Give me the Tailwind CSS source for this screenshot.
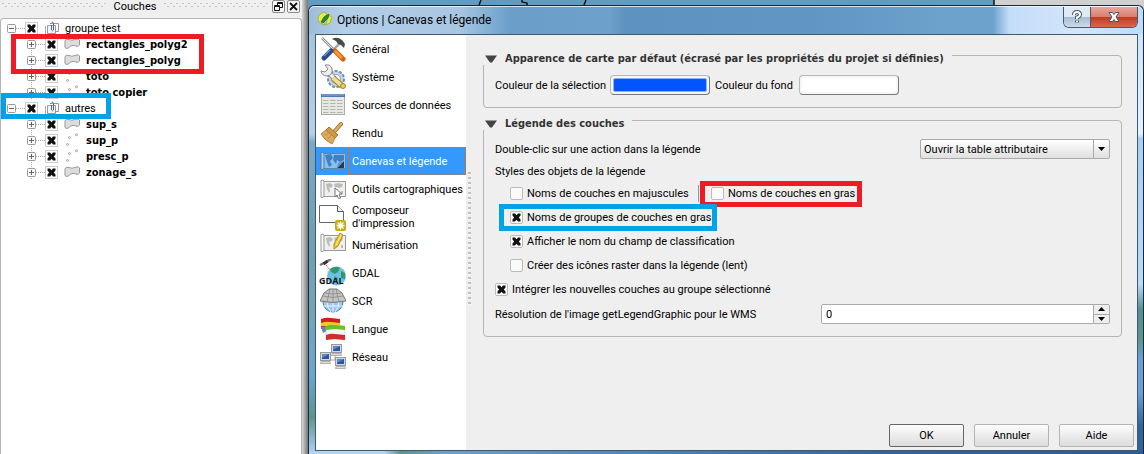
<!DOCTYPE html>
<html lang="fr">
	<head>
		<meta charset="UTF-8" />
		<meta name="viewport" content="width=device-width, initial-scale=1.0" />
		<title>Options | Canevas et légende</title>
		<script src="https://cdn.jsdelivr.net/npm/@tailwindcss/browser@4"></script>
	</head>
	<body
		class="flex h-screen overflow-hidden bg-[#efefef] font-[Roboto,'Liberation_Sans',sans-serif] text-[11px] leading-[13px] text-black"
	>
		<!-- Symboles SVG -->
		<svg class="hidden">
			<symbol id="cross" viewBox="0 0 13 13">
				<path d="M2.5 2.5H5L6.5 4.3L8 2.5H10.5V4.6L8.8 6.5L10.5 8.4V10.5H8L6.5 8.8L5 10.5H2.5V8.4L4.2 6.5L2.5 4.6Z" fill="#111" />
			</symbol>
			<symbol id="plus" viewBox="0 0 18 16">
				<path d="M4.500 0V16M9 8.500H18" stroke="#aaa" stroke-dasharray="1 1" />
				<rect x=".5" y="4.500" width="8" height="8" rx="1" fill="#fafafa" stroke="#999" />
				<path d="M2 8.500H7M4.500 6V11" stroke="#666" />
			</symbol>
			<symbol id="minus" viewBox="0 0 18 16">
				<path d="M9 8.500H18" stroke="#aaa" stroke-dasharray="1 1" />
				<rect x=".5" y="4.500" width="8" height="8" rx="1" fill="#fafafa" stroke="#999" />
				<path d="M2 8.500H7" stroke="#666" />
			</symbol>
			<symbol id="group" viewBox="0 0 14 14">
				<path d="M.5 5V13.500" fill="none" stroke="#aaa" />
				<path d="M2.500 4.500V12.500H10.500V4.500Z" fill="#f4f4f4" stroke="#999" />
				<path d="M5 2.500H13.500V10.500H10.500" fill="none" stroke="#999" />
				<path d="M6.500 4V9Q7.500 10.500 8.500 9V2.500Q7.500 0 6.500 2" fill="none" stroke="#4a6a9a" />
			</symbol>
			<symbol id="polygon" viewBox="0 0 16 12">
				<path d="M1 2.500Q2 .5 5 1.500Q8 3 10.500 1.500Q14 0 15.500 2V7Q14.500 9 12 8Q9 6.500 6.500 8Q5 10.500 2.500 10.500Q0 10 1 7Z" fill="#ddd" stroke="#999" />
			</symbol>
			<symbol id="points" viewBox="0 0 16 14">
				<g fill="#eee" stroke="#999" stroke-width=".8">
					<circle cx="3.500" cy="11.500" r="1" />
					<circle cx="5.500" cy="4.500" r="1" />
					<circle cx="12.500" cy="1.800" r="1" />
				</g>
			</symbol>
			<symbol id="map" viewBox="0 0 26 20">
				<path d="M3 2.500H25.500V17.500H3Z" fill="#f0f1ee" stroke="#999" />
				<path d="M6 5L10 4L13 6L11 9L9 8L10 12L9 14L7 10ZM14 5L18 4L23 5L22 8L19 9L17 8L15 9ZM16 10L18 10L18 14L16 13ZM21 12H23V15H21Z" fill="#b8bdb6" />
				<path d="M1 1.500Q3.500 0 4 2.500V17Q3.500 19 1 18.500Z" fill="#f8f8f8" stroke="#999" />
			</symbol>
			<symbol id="computer" viewBox="0 0 11 12">
				<rect x=".5" y=".5" width="10" height="8" fill="#d8d8d0" stroke="#999" />
				<rect x="2" y="2" width="7" height="5" fill="#2858a8" />
				<path d="M2 2H9L2 6Z" fill="#5a8ad0" />
				<path d="M1 9.500H10L10.500 11.500H.5Z" fill="#ddd" stroke="#999" stroke-width=".7" />
			</symbol>
		</svg>

		<!-- Panneau des couches -->
		<aside class="flex w-[302px] shrink-0 flex-col">
			<header class="flex h-[18px] items-start pr-0.5 pl-0.5">
				<svg class="mt-[3px] h-1.5 min-w-0 flex-1"><defs><pattern id="grip" width="6" height="6" patternUnits="userSpaceOnUse"><path d="M0 .5H2M3 3.500H5" stroke="#c4c4c4" /></pattern></defs><rect width="100%" height="6" fill="url(#grip)" /></svg>
				<h2 class="px-2">Couches</h2>
				<svg class="mt-[3px] h-1.5 min-w-0 flex-1"><rect width="100%" height="6" fill="url(#grip)" /></svg>
				<button aria-label="Détacher" class="ml-1 grid size-[13px] place-items-center rounded-xs border border-[#888] bg-[#f5f5f5]">
					<svg class="size-[9px]" viewBox="0 0 9 9"><path d="M3.500 3V.5H8.500V5.500H6M3 1.500H9" fill="none" stroke="#111" /><path d="M.5 3.500H5.500V8.500H.5ZM0 4.500H6" fill="none" stroke="#111" /></svg>
				</button>
				<button aria-label="Fermer le panneau" class="ml-0.5 grid size-[13px] place-items-center rounded-xs border border-[#888] bg-[#f5f5f5]">
					<svg class="size-[9px]" viewBox="0 0 9 9"><path d="M1 1L8 8M8 1L1 8" stroke="#111" stroke-width="1.800" /></svg>
				</button>
			</header>

			<div class="relative flex-1 rounded-t-sm border border-b-0 border-[#b4b4b4] bg-white pt-px">
				<ul class="[&_.font-bold]:font-['DejaVu_Sans_Condensed','DejaVu_Sans',sans-serif] [&_.font-bold]:font-bold">
					<li>
						<div class="flex h-4 items-center pl-1.5">
							<svg class="h-4 w-[18px]"><use href="#minus" /></svg>
							<span class="grid"><input id="g1" type="checkbox" checked class="peer size-[13px] appearance-none border border-[#ccc] bg-white [grid-area:1/1]" /><svg class="pointer-events-none hidden size-[13px] [grid-area:1/1] peer-checked:block"><use href="#cross" /></svg></span>
							<svg class="mr-1.5 ml-[7px] size-3.5"><use href="#group" /></svg>
							<label for="g1">groupe test</label>
						</div>
						<ul class="pl-[26px]">
							<li class="flex h-4 items-center">
								<svg class="h-4 w-[18px]"><use href="#plus" /></svg>
								<span class="grid"><input id="c1" type="checkbox" checked class="peer size-[13px] appearance-none border border-[#ccc] bg-white [grid-area:1/1]" /><svg class="pointer-events-none hidden size-[13px] [grid-area:1/1] peer-checked:block"><use href="#cross" /></svg></span>
								<svg class="mr-1.5 ml-1.5 h-3 w-4"><use href="#polygon" /></svg>
								<label for="c1" class="font-bold">rectangles_polyg2</label>
							</li>
							<li class="flex h-4 items-center">
								<svg class="h-4 w-[18px]"><use href="#plus" /></svg>
								<span class="grid"><input id="c2" type="checkbox" checked class="peer size-[13px] appearance-none border border-[#ccc] bg-white [grid-area:1/1]" /><svg class="pointer-events-none hidden size-[13px] [grid-area:1/1] peer-checked:block"><use href="#cross" /></svg></span>
								<svg class="mr-1.5 ml-1.5 h-3 w-4"><use href="#polygon" /></svg>
								<label for="c2" class="font-bold">rectangles_polyg</label>
							</li>
							<li class="flex h-4 items-center">
								<svg class="h-4 w-[18px]"><use href="#plus" /></svg>
								<span class="grid"><input id="c3" type="checkbox" checked class="peer size-[13px] appearance-none border border-[#ccc] bg-white [grid-area:1/1]" /><svg class="pointer-events-none hidden size-[13px] [grid-area:1/1] peer-checked:block"><use href="#cross" /></svg></span>
								<svg class="mr-1.5 ml-1.5 h-3.5 w-4"><use href="#points" /></svg>
								<label for="c3" class="font-bold">toto</label>
							</li>
							<li class="flex h-4 items-center">
								<svg class="h-4 w-[18px]"><use href="#plus" /></svg>
								<span class="grid"><input id="c4" type="checkbox" checked class="peer size-[13px] appearance-none border border-[#ccc] bg-white [grid-area:1/1]" /><svg class="pointer-events-none hidden size-[13px] [grid-area:1/1] peer-checked:block"><use href="#cross" /></svg></span>
								<svg class="mr-1.5 ml-1.5 h-3.5 w-4"><use href="#points" /></svg>
								<label for="c4" class="font-bold">toto copier</label>
							</li>
						</ul>
					</li>
					<li>
						<div class="flex h-4 items-center pl-1.5">
							<svg class="h-4 w-[18px]"><use href="#minus" /></svg>
							<span class="grid"><input id="g2" type="checkbox" checked class="peer size-[13px] appearance-none border border-[#ccc] bg-white [grid-area:1/1]" /><svg class="pointer-events-none hidden size-[13px] [grid-area:1/1] peer-checked:block"><use href="#cross" /></svg></span>
							<svg class="mr-1.5 ml-[7px] size-3.5"><use href="#group" /></svg>
							<label for="g2">autres</label>
						</div>
						<ul class="pl-[26px]">
							<li class="flex h-4 items-center">
								<svg class="h-4 w-[18px]"><use href="#plus" /></svg>
								<span class="grid"><input id="c5" type="checkbox" checked class="peer size-[13px] appearance-none border border-[#ccc] bg-white [grid-area:1/1]" /><svg class="pointer-events-none hidden size-[13px] [grid-area:1/1] peer-checked:block"><use href="#cross" /></svg></span>
								<svg class="mr-1.5 ml-1.5 h-3 w-4"><use href="#polygon" /></svg>
								<label for="c5" class="font-bold">sup_s</label>
							</li>
							<li class="flex h-4 items-center">
								<svg class="h-4 w-[18px]"><use href="#plus" /></svg>
								<span class="grid"><input id="c6" type="checkbox" checked class="peer size-[13px] appearance-none border border-[#ccc] bg-white [grid-area:1/1]" /><svg class="pointer-events-none hidden size-[13px] [grid-area:1/1] peer-checked:block"><use href="#cross" /></svg></span>
								<svg class="mr-1.5 ml-1.5 h-3.5 w-4"><use href="#points" /></svg>
								<label for="c6" class="font-bold">sup_p</label>
							</li>
							<li class="flex h-4 items-center">
								<svg class="h-4 w-[18px]"><use href="#plus" /></svg>
								<span class="grid"><input id="c7" type="checkbox" checked class="peer size-[13px] appearance-none border border-[#ccc] bg-white [grid-area:1/1]" /><svg class="pointer-events-none hidden size-[13px] [grid-area:1/1] peer-checked:block"><use href="#cross" /></svg></span>
								<svg class="mr-1.5 ml-1.5 h-3.5 w-4"><use href="#points" /></svg>
								<label for="c7" class="font-bold">presc_p</label>
							</li>
							<li class="flex h-4 items-center">
								<svg class="h-4 w-[18px]"><use href="#plus" /></svg>
								<span class="grid"><input id="c8" type="checkbox" checked class="peer size-[13px] appearance-none border border-[#ccc] bg-white [grid-area:1/1]" /><svg class="pointer-events-none hidden size-[13px] [grid-area:1/1] peer-checked:block"><use href="#cross" /></svg></span>
								<svg class="mr-1.5 ml-1.5 h-3 w-4"><use href="#polygon" /></svg>
								<label for="c8" class="font-bold">zonage_s</label>
							</li>
						</ul>
					</li>
				</ul>
				<!-- Cadres de repérage -->
				<div class="pointer-events-none absolute top-[15px] left-2.5 h-10 w-[193px] border-5 border-[#ed1c24]"></div>
				<div class="pointer-events-none absolute top-[74px] left-0 h-[26px] w-[110px] border-5 border-[#00a2e8]"></div>
			</div>
		</aside>

		<!-- Séparateur -->
		<div class="w-1.5 shrink-0 bg-linear-to-r from-[#d8d8d8] to-[#777]"></div>

		<!-- Fenêtre Options -->
		<div class="flex min-w-0 flex-1 flex-col bg-[linear-gradient(90deg,#5f9cc0_82%,#d0d0d0_82%)]">
			<svg class="h-[5px] w-full shrink-0" viewBox="0 0 836 5" preserveAspectRatio="none"><path d="M173 0L171 5M214 0V2L219 3V5M278 0L276 5M686 0V5" fill="none" stroke="#111" stroke-width="1.500" /></svg>
			<div role="dialog" aria-labelledby="dlg" class="flex min-h-0 flex-1 flex-col rounded-t-md border border-b-0 border-[#1c2a38] bg-[#b9d1ea]">
				<header
					class="flex h-7 shrink-0 items-start rounded-t-md border-t border-white/70 bg-[linear-gradient(90deg,#9dbcd8_0%,#b4cfe8_4%,#a8c6e2_18%,#6b9fc9_24%,#6da1cb_36%,#5f93bf_38%,#6195c2_60%,#6da2cc_76%,#6da2cc_82%,#c4ddf8_84%,#d3e6fb_92%,#bcdcfb_100%)] pr-[5px] pl-2"
				>
					<svg class="mt-1 size-4" viewBox="0 0 16 16">
						<path d="M7 1Q1 3 1 8Q1 12 5 13L8 14L6 10L8 6L10 3ZM12 4L15 6L13 12L9 14L10 9Z" fill="#e0ee50" stroke="#93ad22" stroke-width=".8" />
						<path d="M12 3L7 6L4 11L6 12L11 7Z" fill="#2f8a2f" stroke="#1e6a28" stroke-width=".8" />
						<path d="M12 3L14 1" stroke="#e8c890" stroke-width="1.500" />
					</svg>
					<h1 id="dlg" class="mt-1.5 ml-1 flex-1 text-[12px] leading-[15px]">Options | Canevas et légende</h1>
					<div class="flex h-[21px] overflow-hidden rounded-b-md border border-t-0 border-[#4a5868]">
						<button aria-label="Aide contextuelle" class="grid w-[27px] place-items-center border-r border-[#4a5868] bg-[linear-gradient(#dfeaf5_50%,#a9bdd0_50%,#c8dced)]">
							<svg class="h-3.5 w-3" viewBox="0 0 12 14"><path d="M3 5Q3 2 6 2T9 4.500Q9 6.500 6 7.500V9M6 10.500V12.500" fill="none" stroke="#4c5566" stroke-width="4" /><path d="M3 5Q3 2 6 2T9 4.500Q9 6.500 6 7.500V9M6 10.800V12.300" fill="none" stroke="#fff" stroke-width="2" /></svg>
						</button>
						<button aria-label="Fermer" class="grid w-[46px] place-items-center bg-[linear-gradient(#eaa59a_0%,#d9806f_48%,#bf3a22_50%,#d9684a_100%)]">
							<svg class="h-3 w-3.5" viewBox="0 0 14 12"><path d="M2 1.500H5.500L7 3.500L8.500 1.500H12L9 6L12 10.500H8.500L7 8.500L5.500 10.500H2L5 6Z" fill="#fff" stroke="#4c5566" /></svg>
						</button>
					</div>
				</header>

				<div class="flex min-h-0 flex-1">
					<div class="w-1.5 bg-[linear-gradient(#a5c4de_0%,#b5d0e6_24%,#7ba8c8_26%,#6f9fb4_50%,#74a4b4_65%,#6aa5d0_82%,#5c958c_92%,#a8cdf0_100%)]"></div>
					<div class="flex min-w-0 flex-1 border border-[#3f5a70] bg-[#efefef]">
						<!-- Navigation -->
						<nav class="w-[150px] shrink-0 bg-white">
							<ul class="[&_a]:flex [&_a]:h-7 [&_a]:items-center [&_a]:gap-1.5 [&_a]:pl-1 [&_svg]:shrink-0">
								<li><a href="#general">
									<svg class="size-[26px]" viewBox="0 0 26 26">
										<path d="M2 2L14 14" stroke="#999" stroke-width="2.600" /><path d="M2 2L14 14" stroke="#ddd" />
										<path d="M20 7L11 16" stroke="#aaa" stroke-width="2.500" />
										<path d="M15 15L23 23" stroke="#d8640a" stroke-width="5" stroke-linecap="round" /><path d="M15 15L22 22" stroke="#ff9a3c" stroke-width="2.500" />
										<path d="M11 15L4 22" stroke="#254d8d" stroke-width="5" stroke-linecap="round" /><path d="M10 14L4 20" stroke="#6a94cc" stroke-width="1.500" />
										<path d="M12 3Q17 0 22 4L25 8L24 12L21 9L18 8L16 5Z" fill="#484c4c" />
									</svg>
									<span>Général</span>
								</a></li>
								<li><a href="#systeme">
									<svg class="size-[26px]" viewBox="0 0 26 26">
										<circle cx="16" cy="15" r="8" fill="#c4d6e6" stroke="#6d8fb4" stroke-width="2" stroke-dasharray="3 1.500" />
										<circle cx="16" cy="15" r="4.500" fill="#fff" stroke="#8aa6c0" />
										<path d="M8 8L15 15" stroke="#888" stroke-width="5" /><path d="M7 7L16 16" stroke="#eee" stroke-width="3.200" />
										<path d="M5 1Q11 0 12 5Q13 11 7 12Q2 12 1 7L5 8L8 5Z" fill="#eee" stroke="#888" />
										<path d="M13 14L22 22" stroke="#a08030" stroke-width="6" /><path d="M13 14L22 22" stroke="#f0dc8c" stroke-width="4" />
										<circle cx="23" cy="22" r="2.500" fill="#f0cc50" stroke="#a08030" />
									</svg>
									<span>Système</span>
								</a></li>
								<li><a href="#sources">
									<svg class="size-[26px]" viewBox="0 0 26 26">
										<rect x="1.500" y="2.500" width="23" height="20" fill="#e8e8e4" stroke="#aaa" />
										<path d="M1 2H25V5H1Z" fill="#4a7ab8" /><path d="M2 3H24" stroke="#8ab0e0" />
										<path d="M3 8.500H23M3 11.500H23M3 14.500H23M3 17.500H23M3 20.500H23" stroke="#b4b4b0" stroke-dasharray="5.500 1.500" />
									</svg>
									<span>Sources de données</span>
								</a></li>
								<li><a href="#rendu">
									<svg class="size-[26px]" viewBox="0 0 26 26">
										<path d="M14 12L21 4" stroke="#9a6a2a" stroke-width="4" stroke-linecap="round" /><path d="M14 12L21 4" stroke="#e0ac60" stroke-width="2.500" stroke-linecap="round" />
										<path d="M9 7L18 15L15 18L6 10Z" fill="#d09a48" stroke="#a87428" />
										<path d="M6 10L15 18L12 24Q5 21 1 14Z" fill="#dcaa5c" stroke="#b48438" />
										<path d="M8 13L5 16M11 15L8 19" stroke="#c09048" />
									</svg>
									<span>Rendu</span>
								</a></li>
								<li><a href="#canevas" aria-current="page" class="bg-[#3399ff] text-white">
									<svg class="h-5 w-[26px]" viewBox="0 0 26 20">
										<path d="M3 2.500H25.500V17.500H3Z" fill="#8cc0ee" stroke="#5f86b0" />
										<path d="M5 4L11 3L13 7L10 10L12 14L9 16L7 11ZM14 4L24 4V9L20 11L17 9L16 13L13 9Z" fill="#3f80c0" />
										<path d="M17 17L24 10V17Z" fill="#1c3c60" /><path d="M17 17L18 12L24 10Z" fill="#5a96d0" />
										<path d="M1 1.500Q3.500 0 4 2.500V17Q3.500 19 1 18.500Z" fill="#a8d0f4" stroke="#5577a0" />
									</svg>
									<span class="-ml-1 flex h-full flex-1 items-center border border-dotted border-[#d07020] pl-[3px] whitespace-nowrap">Canevas et légende</span>
								</a></li>
								<li><a href="#outils">
									<svg class="h-5 w-[26px]" viewBox="0 0 26 20"><use href="#map" width="26" height="20" /><path d="M15 9V18L17 16L18.500 19.500L20.500 19L19 15H22Z" fill="#fff" stroke="#777" /></svg>
									<span class="whitespace-nowrap">Outils cartographiques</span>
								</a></li>
								<li><a href="#composeur">
									<svg class="-ml-px h-7 w-[27px]" viewBox="0 0 27 28">
										<path d="M.5 2.500H18.500L24.500 8.500V19.500H.5Z" fill="#fff" stroke="#666" /><path d="M18.500 2.500V8.500H24.500" fill="#eee" stroke="#555" />
										<rect x="16" y="17" width="11" height="11" rx="2" fill="#c8a818" />
										<path d="M21.500 18.500V26.500M17.500 22.500H25.500M18.500 19.500L24.500 25.500M24.500 19.500L18.500 25.500" stroke="#fff" stroke-width="1.300" />
									</svg>
									<span>Composeur d'impression</span>
								</a></li>
								<li><a href="#numerisation">
									<svg class="h-6 w-[26px]" viewBox="0 0 26 24"><use href="#map" width="26" height="20" /><path d="M20 0L23 2L18 13L14 16V11Z" fill="#f2c832" stroke="#b08c20" /><path d="M21 2L16 12" stroke="#fff09a" /></svg>
									<span>Numérisation</span>
								</a></li>
								<li><a href="#gdal">
									<svg class="-ml-px h-7 w-[27px]" viewBox="0 0 27 28">
										<circle cx="17.500" cy="17" r="9.500" fill="#6ec0ea" />
										<path d="M11 10Q17 6 21 9L19 13L16 15L12 13ZM22 12L26 14L26 20L22 19ZM15 17L19 19L17 24Z" fill="#2f9a62" />
										<path d="M1 6L5 4M8 2.500L12 0" stroke="#777" stroke-width="2.500" /><path d="M4.500 5L8.500 2" stroke="#333" stroke-width="3" />
										<path d="M7 6L11 11" stroke="#d33" stroke-dasharray="1 1" />
										<text x="0" y="25" font-family="Open Sans, DejaVu Sans Condensed" font-size="9" font-weight="bold" fill="#111">GDAL</text>
									</svg>
									<span>GDAL</span>
								</a></li>
								<li><a href="#scr">
									<svg class="size-[26px]" viewBox="0 0 26 26">
										<circle cx="13" cy="14" r="10" fill="#9cc8ee" stroke="#4a80b8" />
										<path d="M13 14V24M3 18H23M7 13Q7 20 11 24M19 13Q19 20 15 24" fill="none" stroke="#e8f4ff" />
										<path d="M9 1H17L22 5L26 13Q13 16 0 13L4 5Z" fill="#c4c4c4" stroke="#777" />
										<path d="M3 8Q13 11 23 8M5 5Q13 7 21 5M10 1L7 14M16 1L19 14M13 1V15" fill="none" stroke="#888" stroke-width=".8" />
									</svg>
									<span>SCR</span>
								</a></li>
								<li><a href="#langue">
									<svg class="size-[26px]" viewBox="0 0 26 26">
										<path d="M1 3Q6 1 11 2L20 3V13H1Z" fill="#cc2020" /><path d="M1 7Q6 5 11 6L20 7V10H1Z" fill="#f6c820" /><path d="M1 11Q4 10 7 11V15L3 17Z" fill="#5a88b8" />
										<path d="M6 10Q11 8 15 9L25 10V24L15 23L6 22Z" fill="#f4f4f4" stroke="#bbb" stroke-width=".5" /><path d="M6 10Q11 8 15 9L25 10V14L15 13L6 14Z" fill="#6cbf28" /><path d="M6 19Q11 17 15 18L25 19V24L15 23L6 24Z" fill="#d42c2c" />
									</svg>
									<span>Langue</span>
								</a></li>
								<li><a href="#reseau">
									<svg class="size-[26px]" viewBox="0 0 26 26"><path d="M6 16H20V22M15 10V16" fill="none" stroke="#aaa" /><use href="#computer" x="11" y="0" width="11" height="12" /><use href="#computer" x="0" y="8" width="11" height="12" /><use href="#computer" x="15" y="13" width="11" height="12" /></svg>
									<span>Réseau</span>
								</a></li>
							</ul>
						</nav>

						<div class="flex w-1.5 shrink-0 items-center justify-center pb-2"><div class="h-[134px] w-[3px] bg-[repeating-linear-gradient(#c0c0c0_0px,#c0c0c0_2px,#f8f8f8_2px,#f8f8f8_3px,transparent_3px,transparent_5px)]"></div></div>

						<!-- Page Canevas et légende -->
						<form class="flex min-w-0 flex-1 flex-col pt-5 pr-[3px] pb-[3px] pl-[11px]">
							<fieldset class="relative mr-3 rounded-sm border border-[#b4b4b4] px-[11px] pt-[19px] pb-3">
								<legend class="absolute -top-1 -left-px flex items-center gap-2 bg-[#efefef] pr-2 pl-0.5 font-['DejaVu_Sans_Condensed','DejaVu_Sans',sans-serif] font-bold text-[#333]">
									<svg class="h-2 w-3" viewBox="0 0 12 8"><path d="M0 .5H12L7 7.500H5Z" fill="#444" /></svg>
									Apparence de carte par défaut (écrasé par les propriétés du projet si définies)
								</legend>
								<div class="flex h-5 items-center whitespace-nowrap">
									<label for="sel" class="w-[115px]">Couleur de la sélection</label>
									<button id="sel" type="button" class="h-5 w-[100px] rounded-sm border border-[#b8b8b8] border-r-[#777] border-b-[#777] bg-[#f6f6f6] p-0.5"><span class="block h-full rounded-xs border border-[#8ab4ff] bg-[#0055ff]"></span></button>
									<label for="fond" class="ml-[5px] w-[84px]">Couleur du fond</label>
									<button id="fond" type="button" class="h-5 w-[100px] rounded-sm border border-[#b8b8b8] border-r-[#777] border-b-[#777] bg-[#f6f6f6] p-0.5"><span class="block h-full rounded-xs bg-white"></span></button>
								</div>
							</fieldset>

							<fieldset class="relative mt-3 mr-3 rounded-sm border border-[#b4b4b4] px-[11px] pt-[18px] pb-3">
								<legend class="absolute -top-1 -left-px flex items-center gap-2 bg-[#efefef] pr-2 pl-0.5 font-['DejaVu_Sans_Condensed','DejaVu_Sans',sans-serif] font-bold text-[#333]">
									<svg class="h-2 w-3" viewBox="0 0 12 8"><path d="M0 .5H12L7 7.500H5Z" fill="#444" /></svg>
									Légende des couches
								</legend>
								<div class="flex h-5 items-center justify-between">
									<label for="action">Double-clic sur une action dans la légende</label>
									<div class="relative">
										<select id="action" class="h-5 w-[190px] appearance-none rounded-xs border border-[#aaa] bg-linear-to-b from-white to-[#e0e0e0] pl-[3px] leading-[13px]">
											<option>Ouvrir la table attributaire</option>
										</select>
										<span class="pointer-events-none absolute inset-y-px right-px grid w-4 place-items-center border-l border-[#aaa]"><svg class="h-1 w-[7px]" viewBox="0 0 7 4"><path d="M0 0H7L3.500 4Z" /></svg></span>
									</div>
								</div>
								<p class="mt-1.5 h-4">Styles des objets de la légende</p>
								<div class="pl-[15px]">
									<div class="flex h-6 items-center">
										<div class="flex w-[188px] items-center gap-1">
											<span class="grid"><input id="o1" type="checkbox" class="peer size-[13px] appearance-none rounded-xs border border-[#bbb] bg-[#fafafa] [grid-area:1/1]" /><svg class="pointer-events-none hidden size-[13px] [grid-area:1/1] peer-checked:block"><use href="#cross" /></svg></span>
											<label for="o1">Noms de couches en majuscules</label>
										</div>
										<div class="relative flex items-center gap-1 border-l border-[#999] py-0.5 pl-3">
											<span class="grid"><input id="o2" type="checkbox" class="peer size-[13px] appearance-none rounded-xs border border-[#bbb] bg-[#fafafa] [grid-area:1/1]" /><svg class="pointer-events-none hidden size-[13px] [grid-area:1/1] peer-checked:block"><use href="#cross" /></svg></span>
											<label for="o2">Noms de couches en gras</label>
											<div class="pointer-events-none absolute -top-1 left-px h-[26px] w-[162px] border-5 border-[#ed1c24]"></div>
										</div>
									</div>
									<div class="relative flex h-6 items-center gap-1">
										<span class="grid"><input id="o3" type="checkbox" checked class="peer size-[13px] appearance-none rounded-xs border border-[#bbb] bg-[#fafafa] [grid-area:1/1]" /><svg class="pointer-events-none hidden size-[13px] [grid-area:1/1] peer-checked:block"><use href="#cross" /></svg></span>
										<label for="o3">Noms de groupes de couches en gras</label>
										<div class="pointer-events-none absolute -top-px -left-[11px] h-[27px] w-[218px] border-5 border-[#00a2e8]"></div>
									</div>
									<div class="flex h-6 items-center gap-1">
										<span class="grid"><input id="o4" type="checkbox" checked class="peer size-[13px] appearance-none rounded-xs border border-[#bbb] bg-[#fafafa] [grid-area:1/1]" /><svg class="pointer-events-none hidden size-[13px] [grid-area:1/1] peer-checked:block"><use href="#cross" /></svg></span>
										<label for="o4">Afficher le nom du champ de classification</label>
									</div>
									<div class="flex h-6 items-center gap-1">
										<span class="grid"><input id="o5" type="checkbox" class="peer size-[13px] appearance-none rounded-xs border border-[#bbb] bg-[#fafafa] [grid-area:1/1]" /><svg class="pointer-events-none hidden size-[13px] [grid-area:1/1] peer-checked:block"><use href="#cross" /></svg></span>
										<label for="o5">Créer des icônes raster dans la légende (lent)</label>
									</div>
								</div>
								<div class="flex h-6 items-center gap-1">
									<span class="grid"><input id="o6" type="checkbox" checked class="peer size-[13px] appearance-none rounded-xs border border-[#bbb] bg-[#fafafa] [grid-area:1/1]" /><svg class="pointer-events-none hidden size-[13px] [grid-area:1/1] peer-checked:block"><use href="#cross" /></svg></span>
									<label for="o6">Intégrer les nouvelles couches au groupe sélectionné</label>
								</div>
								<div class="mt-[3px] flex h-5 items-center justify-between">
									<label for="res">Résolution de l'image getLegendGraphic pour le WMS</label>
									<div class="flex h-5 w-[289px] overflow-hidden rounded-xs border border-[#aaa] bg-white">
										<input id="res" type="text" inputmode="numeric" value="0" class="min-w-0 flex-1 pl-1" />
										<div class="flex w-4 flex-col divide-y divide-[#aaa] border-l border-[#aaa] bg-[#eee]">
											<button type="button" aria-label="Augmenter" class="grid flex-1 place-items-center"><svg class="h-1 w-[7px]" viewBox="0 0 7 4"><path d="M0 4H7L3.500 0Z" /></svg></button>
											<button type="button" aria-label="Diminuer" class="grid flex-1 place-items-center"><svg class="h-1 w-[7px]" viewBox="0 0 7 4"><path d="M0 0H7L3.500 4Z" /></svg></button>
										</div>
									</div>
								</div>
							</fieldset>

							<div class="mt-auto flex justify-end gap-2.5">
								<button type="button" class="h-[23px] w-[75px] rounded-xs border border-[#666] bg-linear-to-b from-[#fdfdfd] to-[#dcdcdc]">OK</button>
								<button type="button" class="h-[23px] w-[75px] rounded-xs border border-[#b4b4b4] bg-linear-to-b from-[#fdfdfd] to-[#dcdcdc]">Annuler</button>
								<button type="button" class="h-[23px] w-[75px] rounded-xs border border-[#b4b4b4] bg-linear-to-b from-[#fdfdfd] to-[#dcdcdc]">Aide</button>
							</div>
						</form>
					</div>
					<div class="w-[5px] bg-[linear-gradient(#cfe4fc_0%,#e4f1ff_24%,#a9cff5_25%,#b8daf8_60%,#568f94_66%,#5c948c_73%,#6aa0d4_78%,#6aa0d4_86%,#2f659c_94%)]"></div>
				</div>
				<div class="h-[3px] bg-[linear-gradient(90deg,#b4d4f4_0%,#b4d4f4_9%,#5c948c_11%,#6aa0cc_16%,#4a86b8_40%,#2f659c_70%,#2a5f95_100%)]"></div>
			</div>
		</div>
	</body>
</html>
